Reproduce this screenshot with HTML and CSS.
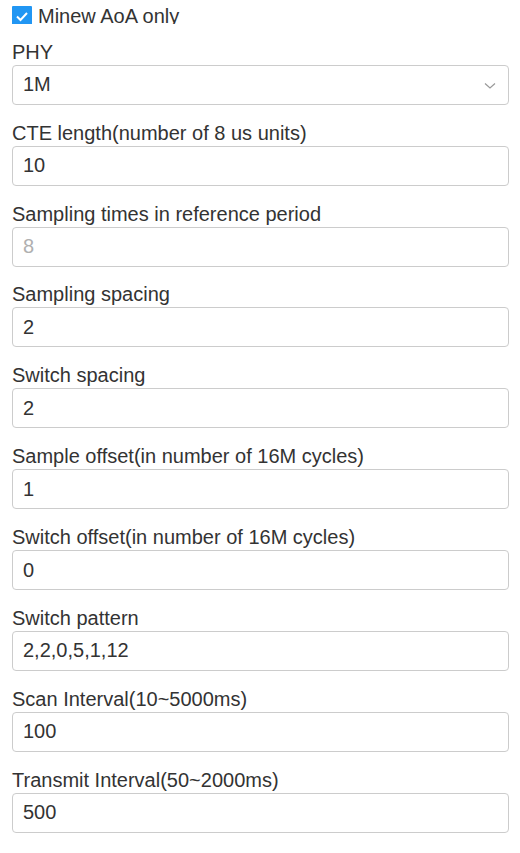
FILE: index.html
```html
<!DOCTYPE html>
<html>
<head>
<meta charset="utf-8">
<link rel="stylesheet" href="styles.css">
</head>
<body>
<div class="form">
  <div class="check-row">
    <span class="checkbox"><svg viewBox="0 0 20 20" width="20" height="20"><path d="M5 10.5 L8.5 14 L15 7" fill="none" stroke="#fff" stroke-width="2"/></svg></span>
    <span class="check-label">Minew AoA only</span>
  </div>
  <div class="group">
    <div class="label">PHY</div>
    <div class="input select">1M<svg class="chev" viewBox="0 0 12 8" width="12" height="8"><path d="M1 1.5 L6 6 L11 1.5" fill="none" stroke="#999" stroke-width="1.2"/></svg></div>
  </div>
  <div class="group">
    <div class="label">CTE length(number of 8 us units)</div>
    <div class="input">10</div>
  </div>
  <div class="group">
    <div class="label">Sampling times in reference period</div>
    <div class="input disabled">8</div>
  </div>
  <div class="group">
    <div class="label">Sampling spacing</div>
    <div class="input">2</div>
  </div>
  <div class="group">
    <div class="label">Switch spacing</div>
    <div class="input">2</div>
  </div>
  <div class="group">
    <div class="label">Sample offset(in number of 16M cycles)</div>
    <div class="input">1</div>
  </div>
  <div class="group">
    <div class="label">Switch offset(in number of 16M cycles)</div>
    <div class="input">0</div>
  </div>
  <div class="group">
    <div class="label">Switch pattern</div>
    <div class="input">2,2,0,5,1,12</div>
  </div>
  <div class="group">
    <div class="label">Scan Interval(10~5000ms)</div>
    <div class="input">100</div>
  </div>
  <div class="group">
    <div class="label">Transmit Interval(50~2000ms)</div>
    <div class="input">500</div>
  </div>
</div>
</body>
</html>
```
FILE: styles.css
```css
html, body {
  margin: 0;
  padding: 0;
  background: #fff;
}
body {
  font-family: "Liberation Sans", Arial, sans-serif;
  font-size: 20px;
  color: #333;
}
.form {
  padding: 0 11px 0 12px;
}
.check-row {
  height: 24px;
  overflow: hidden;
  display: flex;
  align-items: flex-start;
  gap: 6px;
  padding-top: 6px;
  box-sizing: border-box;
}
.checkbox {
  width: 20px;
  height: 20px;
  background: #2196f3;
  border-radius: 1px;
  flex: none;
  display: block;
}
.checkbox svg { display: block; }
.check-label {
  line-height: 20px;
}
.group {
  margin-top: 15.86px;
}
.label {
  height: 25px;
  line-height: 25px;
  white-space: nowrap;
}
.input {
  height: 40px;
  box-sizing: border-box;
  border: 1px solid #ccc;
  border-radius: 4px;
  padding: 0 10px;
  display: flex;
  align-items: center;
  position: relative;
}
.disabled {
  color: #b0b0b0;
}
.chev {
  position: absolute;
  right: 12px;
  top: 16px;
}
```
